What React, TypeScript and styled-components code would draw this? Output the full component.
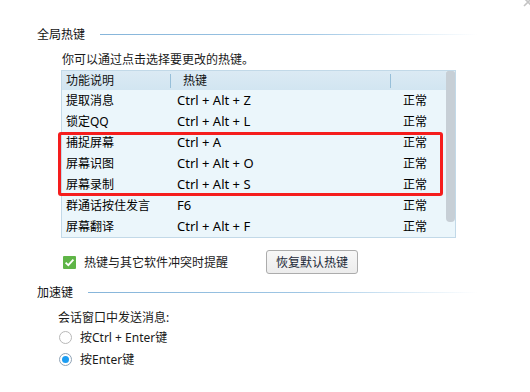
import { FC } from "react";
import styled, { createGlobalStyle } from "styled-components";

const GlobalStyle = createGlobalStyle`
  html, body {
    margin: 0;
    padding: 0;
    background: #ffffff;
  }
  body {
    font-family: "Noto Sans", "Noto Sans CJK SC", sans-serif;
    font-size: 12px;
    color: #1a1a1a;
  }
`;

const hotkeys = [
  { name: "提取消息", keys: "Ctrl + Alt + Z" },
  { name: "锁定QQ", keys: "Ctrl + Alt + L" },
  { name: "捕捉屏幕", keys: "Ctrl + A", marked: true },
  { name: "屏幕识图", keys: "Ctrl + Alt + O", marked: true },
  { name: "屏幕录制", keys: "Ctrl + Alt + S", marked: true },
  { name: "群通话按住发言", keys: "F6" },
  { name: "屏幕翻译", keys: "Ctrl + Alt + F" },
];

const Row: FC<{ name: string; keys: string }> = ({ name, keys }) => (
  <TableRow>
    <Cell $pad={4}>{name}</Cell>
    <Cell $pad={7} $latin>
      {keys}
    </Cell>
    <Cell $pad={13}>正常</Cell>
  </TableRow>
);

export default function App() {
  const before = hotkeys.filter((_, i) => i < 2);
  const marked = hotkeys.filter((h) => h.marked);
  const after = hotkeys.filter((_, i) => i > 4);

  return (
    <Page>
      <GlobalStyle />
      <CloseIcon width="10" height="10" viewBox="0 0 10 10">
        <path d="M1 1 L9 9 M9 1 L1 9" stroke="#c4c4c4" strokeWidth="1.6" />
      </CloseIcon>

      <SectionHeader>
        <span>全局热键</span>
        <Rule />
      </SectionHeader>
      <SectionBody $indent={61}>
        <Hint>你可以通过点击选择要更改的热键。</Hint>
        <Table>
          <TableMain>
            <HeaderRow>
              <HeaderCell $pad={4}>功能说明</HeaderCell>
              <HeaderCell $pad={13} $divider>
                热键
              </HeaderCell>
              <HeaderCell $pad={13} $divider />
            </HeaderRow>
            {before.map((h) => (
              <Row key={h.name} name={h.name} keys={h.keys} />
            ))}
            <Highlight>
              {marked.map((h) => (
                <Row key={h.name} name={h.name} keys={h.keys} />
              ))}
            </Highlight>
            {after.map((h) => (
              <Row key={h.name} name={h.name} keys={h.keys} />
            ))}
          </TableMain>
          <ScrollTrack>
            <ScrollThumb />
          </ScrollTrack>
        </Table>
        <OptionRow>
          <CheckBox>
            <svg width="13" height="13" viewBox="0 0 13 13">
              <path
                d="M2.6 6.6 L5.3 9.2 L10.4 3.6"
                fill="none"
                stroke="#ffffff"
                strokeWidth="1.8"
              />
            </svg>
          </CheckBox>
          <CheckLabel>热键与其它软件冲突时提醒</CheckLabel>
          <ResetButton>恢复默认热键</ResetButton>
        </OptionRow>
      </SectionBody>

      <SectionHeader $gap={11}>
        <span>加速键</span>
        <Rule />
      </SectionHeader>
      <SectionBody $indent={58}>
        <SubLabel>会话窗口中发送消息:</SubLabel>
        <RadioRow>
          <RadioCircle />
          <RadioText>按Ctrl + Enter键</RadioText>
        </RadioRow>
        <RadioRow>
          <RadioCircle $checked />
          <RadioText>按Enter键</RadioText>
        </RadioRow>
      </SectionBody>
    </Page>
  );
}

const Page = styled.div`
  position: relative;
  width: 530px;
  height: 392px;
  box-sizing: border-box;
  padding-top: 27px;
  overflow: hidden;
  background: #ffffff;
`;

const CloseIcon = styled.svg`
  position: absolute;
  left: 523px;
  top: -3px;
`;

const SectionHeader = styled.div<{ $gap?: number }>`
  display: flex;
  align-items: center;
  gap: 15px;
  height: 16px;
  line-height: 16px;
  margin-top: ${(p) => p.$gap ?? 0}px;
  padding: 0 52px 0 37px;
  color: #111111;
  white-space: nowrap;
`;

const Rule = styled.div`
  flex: 1;
  height: 1px;
  margin-top: -1px;
  background: linear-gradient(
    to right,
    #86b5da 0%,
    #9fc6e4 55%,
    #d6e8f5 80%,
    rgba(255, 255, 255, 0) 100%
  );
`;

const SectionBody = styled.div<{ $indent: number }>`
  padding-left: ${(p) => p.$indent}px;
`;

const Hint = styled.div`
  margin: 9px 0 0 1px;
  line-height: 16px;
  color: #1a1a1a;
`;

const Table = styled.div`
  display: flex;
  width: 395px;
  margin-top: 2px;
  box-sizing: border-box;
  border: 1px solid #c2d9e8;
  background: #ebf6fb;
`;

const TableMain = styled.div`
  flex: none;
  width: 384px;
`;

const HeaderRow = styled.div`
  display: grid;
  grid-template-columns: 108px 220px 56px;
  height: 19px;
  background: linear-gradient(#dbeaf4, #d2e5f1);
`;

const HeaderCell = styled.div<{ $pad: number; $divider?: boolean }>`
  position: relative;
  padding-left: ${(p) => p.$pad}px;
  line-height: 19px;
  color: #111111;

  &::before {
    content: "";
    display: ${(p) => (p.$divider ? "block" : "none")};
    position: absolute;
    left: 0;
    top: 3px;
    bottom: 2px;
    width: 1px;
    background: #97bfd9;
  }
`;

const TableRow = styled.div`
  display: grid;
  grid-template-columns: 108px 220px 56px;
  height: 21px;
  line-height: 21px;
`;

const Cell = styled.div<{ $pad: number; $latin?: boolean }>`
  padding-left: ${(p) => p.$pad}px;
  font-size: ${(p) => (p.$latin ? 13 : 12)}px;
  color: #000000;
  white-space: nowrap;
`;

const Highlight = styled.div`
  position: relative;

  &::after {
    content: "";
    position: absolute;
    top: 0;
    bottom: -1px;
    left: -4px;
    right: 3px;
    border: 3px solid #f51d1d;
    border-radius: 3px;
    pointer-events: none;
  }
`;

const ScrollTrack = styled.div`
  flex: 1;
  display: flex;
  flex-direction: column;
`;

const ScrollThumb = styled.div`
  height: 151px;
  background: #c7cfd6;
  border-radius: 2px 2px 4px 4px;
`;

const OptionRow = styled.div`
  display: flex;
  align-items: center;
  margin-top: 12px;
  padding-left: 2px;
`;

const CheckBox = styled.div`
  width: 13px;
  height: 13px;
  background: #5fb547;
  border-radius: 1px;
  display: flex;
`;

const CheckLabel = styled.span`
  margin-left: 8px;
  color: #1a1a1a;
`;

const ResetButton = styled.button`
  margin-left: 38px;
  width: 92px;
  height: 24px;
  padding: 0;
  border: 1px solid #acacac;
  border-radius: 3px;
  background: linear-gradient(#f7f7f7, #ececec);
  font-family: inherit;
  font-size: 12px;
  color: #1c2a38;
`;

const SubLabel = styled.div`
  margin-top: 9px;
  line-height: 16px;
  color: #1a1a1a;
`;

const RadioRow = styled.div`
  display: flex;
  align-items: center;
  height: 22px;
  padding-left: 1px;
`;

const RadioCircle = styled.span<{ $checked?: boolean }>`
  position: relative;
  width: 13px;
  height: 13px;
  box-sizing: border-box;
  border-radius: 50%;
  border: 1px solid ${(p) => (p.$checked ? "#8fa3b6" : "#b8b8b8")};
  background: #ffffff;

  &::after {
    content: "";
    display: ${(p) => (p.$checked ? "block" : "none")};
    position: absolute;
    left: 2px;
    top: 2px;
    width: 7px;
    height: 7px;
    border-radius: 50%;
    background: #1c9df2;
  }
`;

const RadioText = styled.span`
  margin-left: 8px;
  color: #1a1a1a;
`;
